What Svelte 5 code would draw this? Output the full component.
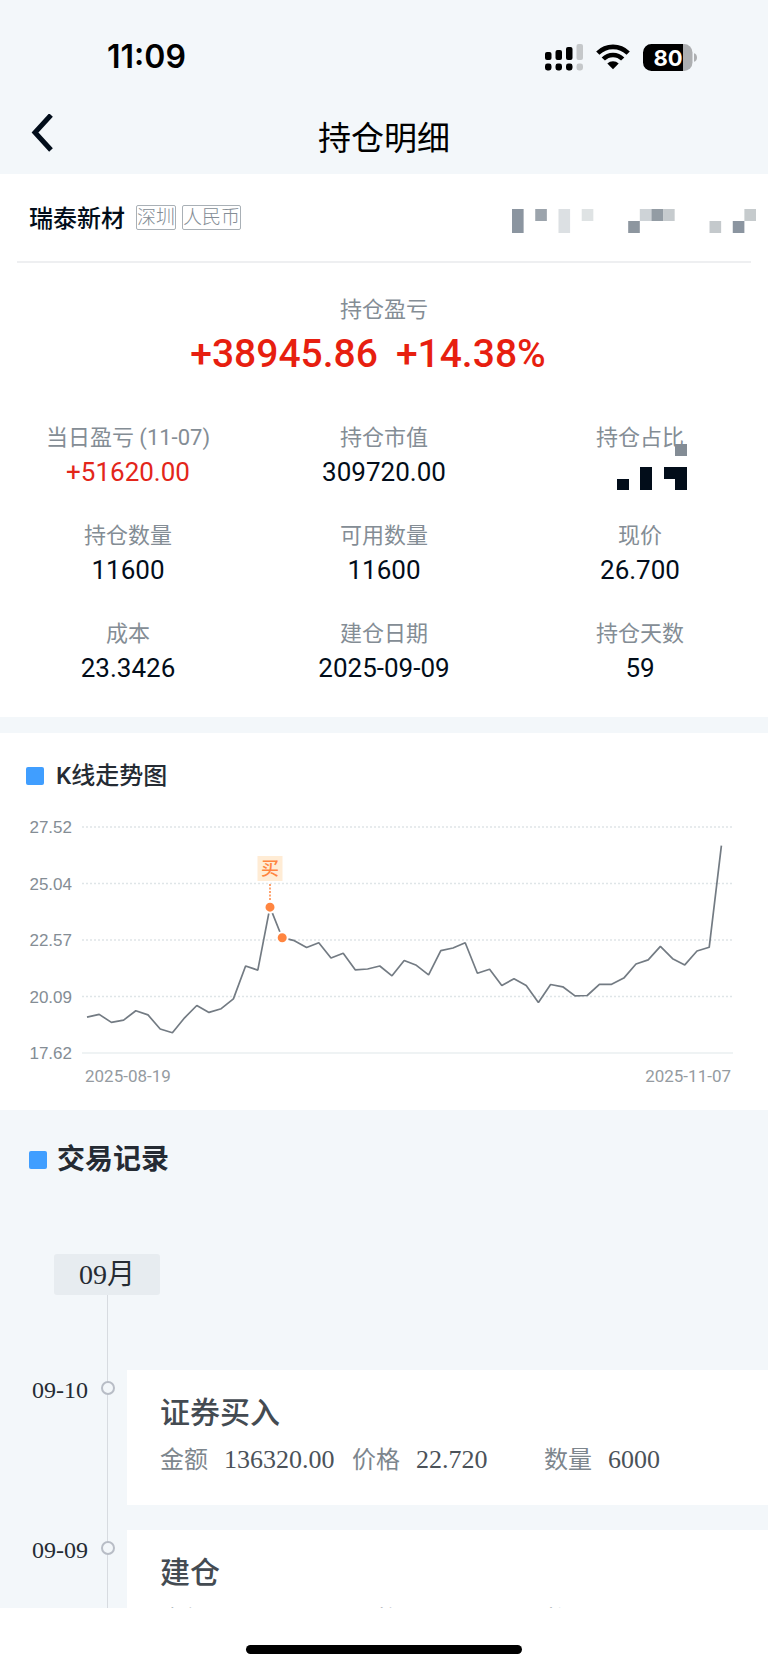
<script>
	const stats = [
		{ label: '当日盈亏 (11-07)', value: '+51620.00', up: true },
		{ label: '持仓市值', value: '309720.00' },
		{ label: '持仓占比', masked: true },
		{ label: '持仓数量', value: '11600' },
		{ label: '可用数量', value: '11600' },
		{ label: '现价', value: '26.700' },
		{ label: '成本', value: '23.3426' },
		{ label: '建仓日期', value: '2025-09-09' },
		{ label: '持仓天数', value: '59' }
	];

	const records = [
		{ date: '09-10', title: '证券买入', amount: '136320.00', price: '22.720', count: '6000' },
		{ date: '09-09', title: '建仓', amount: '134456.00', price: '24.010', count: '5600' }
	];

	// [column, row, rows tall, colour]
	const accountMask = [
		[0, 0, 2, '#8b95a0'],
		[2, 0, 1, '#9ca4ac'],
		[4, 0, 2, '#dce0e3'],
		[6, 0, 1, '#dfe3e4'],
		[10, 1, 1, '#8d969f'],
		[11, 0, 1, '#ced3d7'],
		[12, 0, 1, '#939ca4'],
		[13, 0, 1, '#c6cbce'],
		[17, 1, 1, '#c4c9cc'],
		[19, 1, 1, '#8b95a0'],
		[20, 0, 1, '#c6cbcd']
	];
	const ratioMask = [
		[5, 0, 1, '#838c95'],
		[0, 3, 1, '#020d1a'],
		[2, 2, 2, '#020d1a'],
		[4, 2, 1, '#020d1a'],
		[5, 2, 2, '#020d1a']
	];

	const prices = [
		19.19, 19.31, 18.96, 19.06, 19.47, 19.29, 18.67, 18.51, 19.16, 19.7, 19.4, 19.56, 19.99, 21.43,
		21.25, 24.01, 22.67, 22.54, 22.24, 22.45, 21.78, 21.99, 21.26, 21.3, 21.43, 21.0, 21.67, 21.46,
		21.04, 22.1, 22.22, 22.45, 21.11, 21.29, 20.58, 20.87, 20.58, 19.83, 20.62, 20.52, 20.12, 20.14,
		20.63, 20.63, 20.9, 21.52, 21.7, 22.29, 21.75, 21.48, 22.09, 22.25, 26.7
	];
	const ticks = ['27.52', '25.04', '22.57', '20.09', '17.62'];
	const buys = [15, 16];

	const top = 33;
	const bottom = 259;
	const x = (i) => 87 + i * 12.2;
	const y = (price) => bottom - ((price - 17.62) / (27.52 - 17.62)) * (bottom - top);
	const line = prices.map((p, i) => `${x(i).toFixed(1)},${y(p).toFixed(1)}`).join(' ');
</script>

<div class="page">
	<header>
		<div class="status">
			<span class="time">11:09</span>
			<div class="status-icons">
				<svg width="38" height="27" viewBox="0 0 38 27">
					<rect x="0" y="8" width="6.5" height="8" rx="2" />
					<rect x="10.5" y="6" width="6.5" height="10" rx="2" />
					<rect x="21" y="3" width="6.5" height="13" rx="2" />
					<rect x="31.5" y="0" width="6.5" height="16" rx="2" fill="#c5c8ca" />
					<rect x="0" y="19.5" width="6.5" height="7" rx="2.4" />
					<rect x="10.5" y="19.5" width="6.5" height="7" rx="2.4" />
					<rect x="21" y="19.5" width="6.5" height="7" rx="2.4" />
					<rect x="31.5" y="19.5" width="6.5" height="7" rx="2.4" fill="#c5c8ca" />
				</svg>
				<svg width="34" height="26" viewBox="0 0 34 26">
					<path
						d="M1.8 9.2A21.5 21.5 0 0 1 32.2 9.2M7.3 15A13.6 13.6 0 0 1 26.7 15"
						fill="none"
						stroke="#000"
						stroke-width="4.6"
					/>
					<path d="M17 25.2L11.3 19.6A8.2 8.2 0 0 1 22.7 19.6Z" />
				</svg>
				<svg width="54" height="27" viewBox="0 0 54 27">
					<path d="M40 0h1a8.5 8.5 0 0 1 8.5 8.5v10A8.5 8.5 0 0 1 41 27h-1z" fill="#adafb1" />
					<path d="M51 9.2c4 1 4 7.6 0 8.6z" fill="#adafb1" />
					<path d="M8.5 0H40v27H8.5A8.5 8.5 0 0 1 0 18.5v-10A8.5 8.5 0 0 1 8.5 0z" />
					<text class="battery" x="25" y="21.5" text-anchor="middle">80</text>
				</svg>
			</div>
		</div>
		<nav>
			<button class="back" aria-label="返回">
				<svg width="24" height="46" viewBox="0 0 24 46">
					<path d="M20 1L4 18.5L20 36" fill="none" stroke="#020d1a" stroke-width="5" />
				</svg>
			</button>
			<h1>持仓明细</h1>
		</nav>
	</header>

	<section class="holding">
		<div class="stock">
			<h2>瑞泰新材</h2>
			<span class="tag">深圳</span>
			<span class="tag">人民币</span>
			<svg class="account" width="244" height="24" viewBox="0 0 21 2" preserveAspectRatio="none">
				{#each accountMask as [col, row, tall, fill]}
					<rect x={col} y={row} width="1" height={tall} {fill} />
				{/each}
			</svg>
		</div>

		<div class="profit">
			<p class="label">持仓盈亏</p>
			<p class="total"><span>+38945.86</span><span>+14.38%</span></p>
		</div>

		<dl class="stats">
			{#each stats as stat}
				<div class="stat">
					<dt class="label">{stat.label}</dt>
					<dd class:up={stat.up}>{stat.value ?? ''}</dd>
					{#if stat.masked}
						<svg
							class="mask"
							width="70"
							height="46"
							viewBox="0 0 6 4"
							preserveAspectRatio="none"
							shape-rendering="crispEdges"
						>
							{#each ratioMask as [col, row, tall, fill]}
								<rect x={col} y={row} width="1" height={tall} {fill} />
							{/each}
						</svg>
					{/if}
				</div>
			{/each}
		</dl>
	</section>

	<section class="trend">
		<h2 class="heading">K线走势图</h2>
		<svg class="chart" viewBox="0 0 768 316">
			{#each ticks as tick, i}
				{@const ty = top + (i * (bottom - top)) / 4}
				<text class="tick" x="72" y={ty + 6} text-anchor="end">{tick}</text>
				<line class="grid" class:base={i === 4} x1="82" x2="733" y1={ty} y2={ty} />
			{/each}
			<polyline class="line" points={line} />
			<line class="lead" x1={x(15)} x2={x(15)} y1="90" y2="107" />
			{#each buys as i}
				<circle class="buy" cx={x(i)} cy={y(prices[i])} r="5.5" />
			{/each}
			<rect x={x(15) - 12.5} y="62" width="25" height="25" fill="#ffecd5" />
			<text class="flag" x={x(15)} y="81" text-anchor="middle">买</text>
			<text class="day" x="85" y="288">2025-08-19</text>
			<text class="day" x="731" y="288" text-anchor="end">2025-11-07</text>
		</svg>
	</section>

	<section class="records">
		<h2 class="heading">交易记录</h2>
		<h3 class="month">09月</h3>
		<ol>
			{#each records as record}
				<li>
					<time>{record.date}</time>
					<i class="node"></i>
					<article>
						<h4>{record.title}</h4>
						<dl>
							<div><dt>金额</dt><dd>{record.amount}</dd></div>
							<div><dt>价格</dt><dd>{record.price}</dd></div>
							<div><dt>数量</dt><dd>{record.count}</dd></div>
						</dl>
					</article>
				</li>
			{/each}
		</ol>
	</section>

	<footer><div class="home"></div></footer>
</div>

<style>
	:global(body) {
		background: #fff;
	}

	.page {
		display: flex;
		flex-direction: column;
		height: 100vh;
		overflow: hidden;
		background: #f3f7fa;
		color: #020d1a;
		font-family: Roboto, 'Noto Sans CJK SC', sans-serif;
	}

	header,
	section,
	footer {
		flex: none;
	}

	h1,
	h2,
	h3,
	h4,
	p,
	dl,
	dd,
	ol {
		margin: 0;
		padding: 0;
		font-weight: 400;
	}

	svg {
		display: block;
	}

	.status {
		display: flex;
		align-items: center;
		justify-content: space-between;
		height: 86px;
		padding: 14px 71px 0 107px;
	}

	.time {
		font: 600 32px/40px Inter, sans-serif;
		color: #000;
	}

	.status-icons {
		display: flex;
		align-items: center;
		gap: 13px;
	}

	.battery {
		font: 700 22px Inter, sans-serif;
		fill: #fff;
	}

	nav {
		display: grid;
		grid-template-columns: 60px 1fr 60px;
		align-items: center;
		height: 74px;
	}

	.back {
		justify-self: end;
		padding: 0 5px 0 0;
		border: none;
		background: none;
		cursor: pointer;
	}

	h1 {
		padding-top: 4px;
		font-size: 33px;
		line-height: 48px;
		text-align: center;
		color: #000;
	}

	.holding {
		padding-bottom: 31px;
		background: #fff;
	}

	.stock {
		display: flex;
		align-items: center;
		gap: 6px;
		height: 87px;
		margin: 0 17px;
		padding-left: 12px;
		border-bottom: 2px solid #eeeff1;
	}

	.stock h2 {
		margin-right: 5px;
		padding-top: 2px;
		font-size: 24px;
		font-weight: 500;
		line-height: 36px;
	}

	.tag {
		border: 1px solid #a9b0b6;
		border-radius: 2px;
		font-size: 19px;
		font-weight: 300;
		line-height: 23px;
		color: #848d95;
	}

	.account {
		margin: 6px -5px 0 auto;
	}

	.label {
		font-size: 22px;
		line-height: 32px;
		color: #848d95;
	}

	.profit {
		padding: 31px 0 40px;
		text-align: center;
	}

	.total {
		display: flex;
		justify-content: center;
		gap: 18px;
		padding-right: 32px;
		font-size: 39px;
		font-weight: 500;
		line-height: 56px;
		color: #e71f10;
	}

	.stats {
		display: grid;
		grid-template-columns: repeat(3, 1fr);
		row-gap: 30px;
		text-align: center;
	}

	.stat {
		position: relative;
	}

	.stat dd {
		height: 36px;
		font-size: 26px;
		line-height: 36px;
	}

	.stat .up {
		color: #e3261a;
	}

	.mask {
		position: absolute;
		top: 22px;
		left: calc(50% - 23px);
	}

	.trend {
		margin-top: 16px;
		padding-top: 25px;
		background: #fff;
	}

	.heading {
		display: flex;
		align-items: center;
		gap: 12px;
		padding-left: 26px;
		font-size: 24px;
		font-weight: 500;
		line-height: 36px;
		color: #252b33;
	}

	.heading::before {
		content: '';
		width: 18px;
		height: 18px;
		border-radius: 2px;
		background: #409eff;
	}

	.chart {
		width: 100%;
		height: auto;
	}

	.tick {
		font: 17px 'Liberation Sans', sans-serif;
		fill: #848d95;
	}

	.day {
		font-size: 17px;
		fill: #959ba1;
	}

	.grid {
		stroke: #dfe5e8;
		stroke-width: 1.4;
		stroke-dasharray: 2 2;
	}

	.grid.base {
		stroke: #eff3f4;
		stroke-width: 2;
		stroke-dasharray: none;
	}

	.line {
		fill: none;
		stroke: #737b83;
		stroke-width: 1.7;
		stroke-linejoin: bevel;
	}

	.lead {
		stroke: #ff8540;
		stroke-width: 1.5;
		stroke-dasharray: 2 1.5;
	}

	.buy {
		fill: #ff8540;
		stroke: #fff;
		stroke-width: 2;
	}

	.flag {
		font-size: 18px;
		font-weight: 500;
		fill: #ff8540;
	}

	.records {
		flex: 1;
		min-height: 0;
		overflow: hidden;
		padding-top: 30px;
	}

	.records .heading {
		gap: 10px;
		padding-left: 29px;
		font-size: 28px;
		font-weight: 700;
		line-height: 40px;
	}

	.month {
		width: 106px;
		margin: 74px 0 0 54px;
		border-radius: 3px;
		background: #e7ecf0;
		font: 28px/41px 'Liberation Serif', 'Noto Sans CJK SC', serif;
		text-align: center;
		color: #252b33;
	}

	ol {
		position: relative;
		display: grid;
		gap: 25px;
		padding-top: 75px;
		list-style: none;
	}

	ol::before {
		content: '';
		position: absolute;
		top: 0;
		bottom: 0;
		left: 107px;
		width: 1px;
		background: #d7dbe0;
	}

	li {
		display: grid;
		grid-template-columns: 88px 39px 1fr;
		align-items: start;
	}

	time {
		padding-top: 8px;
		font: 24px/24px 'Liberation Serif', serif;
		text-align: right;
		color: #252b33;
	}

	.node {
		z-index: 1;
		box-sizing: border-box;
		justify-self: center;
		width: 14px;
		height: 14px;
		margin-top: 11px;
		border: 2px solid #b8bdc6;
		border-radius: 50%;
		background: #f3f7fa;
	}

	article {
		padding: 23px 32px 27px 33px;
		background: #fff;
	}

	h4 {
		margin-bottom: 9px;
		font-size: 30px;
		font-weight: 500;
		line-height: 40px;
		color: #444b52;
	}

	article dl {
		display: grid;
		grid-template-columns: repeat(3, 1fr);
	}

	article dl div {
		display: flex;
		gap: 16px;
		font-size: 24px;
		line-height: 36px;
		white-space: nowrap;
	}

	article dt {
		color: #7d868d;
	}

	article dd {
		font: 26px/36px 'Liberation Serif', serif;
		color: #4b5259;
	}

	footer {
		display: flex;
		justify-content: center;
		align-items: end;
		height: 46px;
		padding-bottom: 15px;
		background: #fff;
	}

	.home {
		width: 36%;
		height: 9px;
		border-radius: 5px;
		background: #000;
	}
</style>
